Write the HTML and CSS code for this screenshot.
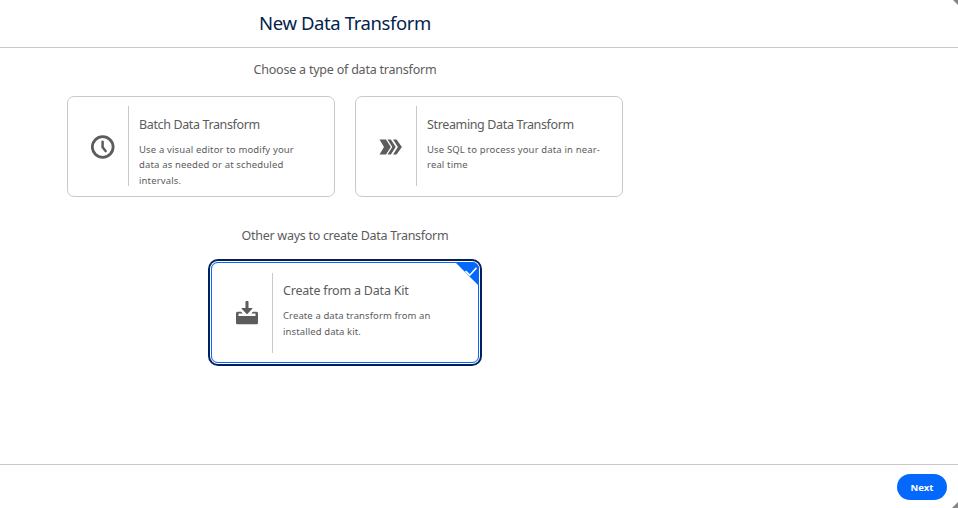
FILE: index.html
```html
<!DOCTYPE html>
<html lang="en">
<head>
<meta charset="utf-8">
<title>New Data Transform</title>
<link rel="stylesheet" href="styles.css">
</head>
<body>
<div class="modal">
  <header class="modal-header"><h1>New Data Transform</h1></header>
  <main class="modal-body">
    <h2 class="choose">Choose a type of data transform</h2>
    <div class="cards">
      <div class="card">
        <div class="icon"><svg width="24" height="24" viewBox="0 0 24 24"><circle cx="11.700" cy="12" r="10.4" fill="none" stroke="#5c5c5c" stroke-width="2.8"/><path d="M11.600 6.800v5.500l3 3.800" fill="none" stroke="#5c5c5c" stroke-width="2.5" stroke-linecap="round" stroke-linejoin="round"/></svg></div>
        <div class="text"><h3 class="t-batch">Batch Data Transform</h3><p>Use a visual editor to modify your<br>data as needed or at scheduled<br>intervals.</p></div>
      </div>
      <div class="card">
        <div class="icon"><svg width="24" height="24" viewBox="0 0 24 24"><path fill="#5c5c5c" d="M.5 4.500h6.500l4.800 7.500-4.800 7.500H.5L5 12zM8.500 4.500h3.400L16.700 12l-4.800 7.500H8.500L13.300 12zM14.100 4.500h3.400L22.900 12l-5.400 7.500h-3.400L18.900 12z"/></svg></div>
        <div class="text"><h3 class="t-stream">Streaming Data Transform</h3><p>Use SQL to process your data in near-<br>real time</p></div>
      </div>
    </div>
    <h2 class="other">Other ways to create Data Transform</h2>
    <div class="cards">
      <div class="card selected">
        <div class="icon"><svg width="24" height="24" viewBox="0 0 24 24"><g fill="#5c5c5c"><path d="M10.500 0.800q0-.8.800-.8h1.400q.8 0 .8.800V7H17q.9 0 .3.800l-4.700 5q-.6.600-1.200 0l-4.700-5Q6 7 7 7h3.500z"/><path d="M2.500 10.700h3.700l1.500 1.700H3.500v2.500h17v-2.500h-4.200l1.500-1.700h3.700q1.500 0 1.500 1.500v9.800q0 1.300-1.300 1.300H2.300Q1 23.300 1 22v-9.800q0-1.500 1.500-1.500z"/></g></svg></div>
        <div class="text"><h3 class="t-kit">Create from a Data Kit</h3><p class="p-kit">Create a data transform from an<br>installed data kit.</p></div>
        <svg class="check" width="24" height="24" viewBox="0 0 24 24"><path d="M0 0h24v24z" fill="#0568fd"/><path d="M10.500 9.200l4.300 4 6.700-7.500" fill="none" stroke="#fff" stroke-width="1.600"/></svg>
      </div>
    </div>
  </main>
  <footer class="modal-footer"><button><span>Next</span></button></footer>
</div>
</body>
</html>
```
FILE: styles.css
```css
* { box-sizing: border-box; }
body { margin: 0; background: #858585; font-family: "Noto Sans", sans-serif; color: #5c5c5c; }
h1, h2, h3, p { margin: 0; font-weight: 400; }
.modal { height: 508px; display: flex; flex-direction: column; background: #fff; clip-path: polygon(0 0, 953px 0, 100% 5px, 100% 502px, 952px 100%, 0 100%); }
.modal-header { height: 48px; border-bottom: 1px solid #c9c9c9; }
h1 { width: 690px; text-align: center; font-size: 18.500px; line-height: 45px; letter-spacing: -.4px; color: #03234d; }
.modal-body { width: 690px; flex: 1; display: flex; flex-direction: column; align-items: center; }
h2 { font-size: 12.500px; line-height: 20px; white-space: nowrap; }
.choose { margin: 12px 0 16px; letter-spacing: -.22px; }
.other { margin: 29px 0 16px; letter-spacing: -.28px; }
.cards { display: flex; gap: 20px; }
.card { position: relative; width: 268px; height: 101px; border: 1px solid #c9c9c9; border-radius: 7px; display: flex; align-items: flex-start; padding-top: 9px; }
.icon { width: 61px; height: 80px; padding: 2px 0 0 10px; border-right: 1px solid #c9c9c9; display: flex; align-items: center; justify-content: center; }
.icon svg { display: block; }
.text { padding: 9px 0 0 10px; white-space: nowrap; }
h3 { font-size: 12.500px; line-height: 20px; }
.t-batch { letter-spacing: -.37px; }
.t-stream { letter-spacing: -.36px; }
.t-kit { letter-spacing: -.2px; }
p { font-size: 9.500px; line-height: 15.400px; margin-top: 7px; letter-spacing: .15px; }
.p-kit { line-height: 15.700px; letter-spacing: .1px; }
.selected { padding-top: 10px; border-color: #0568fd; box-shadow: 0 0 0 1px #fff, 0 0 0 3px #03205c; }
.selected .icon { padding-top: 0; }
.selected .text { padding-top: 8px; }
.check { position: absolute; top: -1px; right: -1px; border-top-right-radius: 7px; }
.modal-footer { height: 44px; border-top: 1px solid #c9c9c9; padding: 9px 11px 0 0; display: flex; justify-content: flex-end; align-items: flex-start; }
button { width: 50px; height: 26px; border: 0; border-radius: 13px; background: #0568fd; color: #fff; font: 700 9.500px/26px "Noto Sans", sans-serif; padding: 1px 0 0; }
```
